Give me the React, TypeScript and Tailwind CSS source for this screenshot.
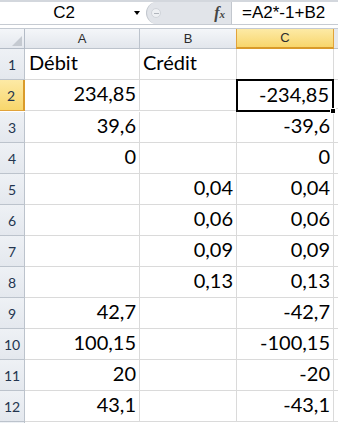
import React from 'react';

const rows: [string, string, string][] = [
  ['234,85', '', '-234,85'],
  ['39,6', '', '-39,6'],
  ['0', '', '0'],
  ['', '0,04', '0,04'],
  ['', '0,06', '0,06'],
  ['', '0,09', '0,09'],
  ['', '0,13', '0,13'],
  ['42,7', '', '-42,7'],
  ['100,15', '', '-100,15'],
  ['20', '', '-20'],
  ['43,1', '', '-43,1'],
];

const cellFont = { fontFamily: 'Lato, "Open Sans", sans-serif' };
const uiFont = { fontFamily: '"Liberation Sans", Arial, sans-serif' };

export default function App() {
  return (
    <div className="w-[338px] h-[423px] overflow-hidden bg-white relative">
      {/* === Formula bar === */}
      <div className="h-[25px] border-t-2 border-b border-t-[#d3d7dd] border-b-[#c6cbd2] flex bg-white">
        <div className="w-[146px] flex items-center relative" style={uiFont}>
          <span className="w-[128px] text-center text-[17px] text-black">C2</span>
          <span className="w-0 h-0 border-l-[3px] border-r-[3px] border-t-[4px] border-l-transparent border-r-transparent border-t-black ml-[6px]" />
        </div>
        <div className="w-[86px] bg-[#e1e4e9] rounded-l-[11px] flex items-center border-l border-[#c2c7ce] border-r">
          <div className="w-[10px] h-[10px] rounded-full bg-[#eef0f3] border border-[#d0d4da] ml-[4px] flex items-center justify-center">
            <div className="w-[5px] h-[1px] bg-[#b0b5bc]" />
          </div>
          <span className="ml-auto mr-[6px] text-[16px] italic font-bold text-[#444]" style={{ fontFamily: '"Liberation Serif", serif' }}>
            f<span className="text-[11px]">x</span>
          </span>
        </div>
        <div className="flex-1 flex items-center pl-[10px] text-[17px] text-black" style={uiFont}>
          =A2*-1+B2
        </div>
      </div>
      <div className="h-[3px] bg-white" />

      {/* === Grid === */}
      <div className="grid grid-cols-[25px_115px_97px_97px_1fr] border-t border-[#c4cad2]">
        <div className="h-[20px] bg-gradient-to-b from-[#f4f6f9] to-[#e4e8ee] border-r border-b border-[#b3bbc6] flex items-end justify-end p-[2px]">
          <div className="w-0 h-0 -mb-[6px]" style={{ borderLeft: '10px solid transparent', borderBottom: '10px solid #c5cad1', marginBottom: 0 }} />
        </div>
        {['A', 'B'].map((c) => (
          <div key={c} className="h-[20px] bg-gradient-to-b from-[#f4f6f9] to-[#e2e6ec] border-r border-b border-[#bcc3cc] flex items-center justify-center text-[13px] text-[#2c2c2c]" style={uiFont}>
            {c}
          </div>
        ))}
        <div className="h-[20px] bg-gradient-to-b from-[#fdeaa5] to-[#f8d66b] border-r border-b-2 border-l border-l-[#e1a33a] border-r-[#e1a33a] border-b-[#d99a2a] -ml-px flex items-center justify-center text-[13px] text-[#2c2c2c]" style={uiFont}>
          C
        </div>
        <div className="h-[20px] bg-[#e6e9ee] border-b border-[#bcc3cc]" />

        {/* row 1 */}
        <RowHead n={1} />
        <div className="h-[31px] border-r border-b border-[#dadada] flex items-end pl-[4px] pb-[2px] text-[20px] text-black" style={cellFont}>Débit</div>
        <div className="h-[31px] border-r border-b border-[#dadada] flex items-end pl-[3px] pb-[2px] text-[20px] text-black" style={cellFont}>Crédit</div>
        <div className="h-[31px] border-r border-b border-[#dadada]" />
        <div className="h-[31px] border-b border-[#dadada]" />

        {rows.map((r, i) => {
          const n = i + 2;
          const sel = n === 2;
          return (
            <React.Fragment key={n}>
              <RowHead n={n} sel={sel} />
              <Cell v={r[0]} />
              <Cell v={r[1]} />
              {sel ? (
                <div className="-ml-px -mt-px border-2 border-black flex items-end justify-end pr-[3px] pb-[1px] text-[20px] text-black relative" style={{ ...cellFont, height: 33, width: 98 }}>
                  -234,85
                  <div className="absolute -right-[4px] -bottom-[4px] w-[6px] h-[6px] bg-black border border-white" />
                </div>
              ) : (
                <Cell v={r[2]} />
              )}
              <div className={`h-[31px] border-b border-[#dadada] ${sel ? '-mt-[2px]' : ''}`} />
            </React.Fragment>
          );
        })}

        <RowHead n={0} />
      </div>
    </div>
  );
}

function RowHead({ n, sel = false }: { n: number; sel?: boolean }) {
  return (
    <div
      className={
        sel
          ? 'h-[31px] bg-gradient-to-b from-[#fdeaa5] to-[#f8d66b] border-r-2 border-b border-r-[#d99a2a] border-b-[#e1a33a] flex items-end justify-center pb-[4px] text-[14px] text-[#23354f] pr-[1px]'
          : 'h-[31px] bg-gradient-to-b from-[#eef1f5] to-[#e4e8ee] border-r border-b border-[#bcc3cc] flex items-end justify-center pb-[4px] text-[14px] text-[#23354f]'
      }
      style={{ fontFamily: 'Lato, "Open Sans", sans-serif' }}
    >
      {n > 0 ? n : ''}
    </div>
  );
}

function Cell({ v }: { v: string }) {
  return (
    <div className="h-[31px] border-r border-b border-[#dadada] flex items-end justify-end pr-[3px] pb-[2px] text-[20px] text-black" style={cellFont}>
      {v}
    </div>
  );
}
